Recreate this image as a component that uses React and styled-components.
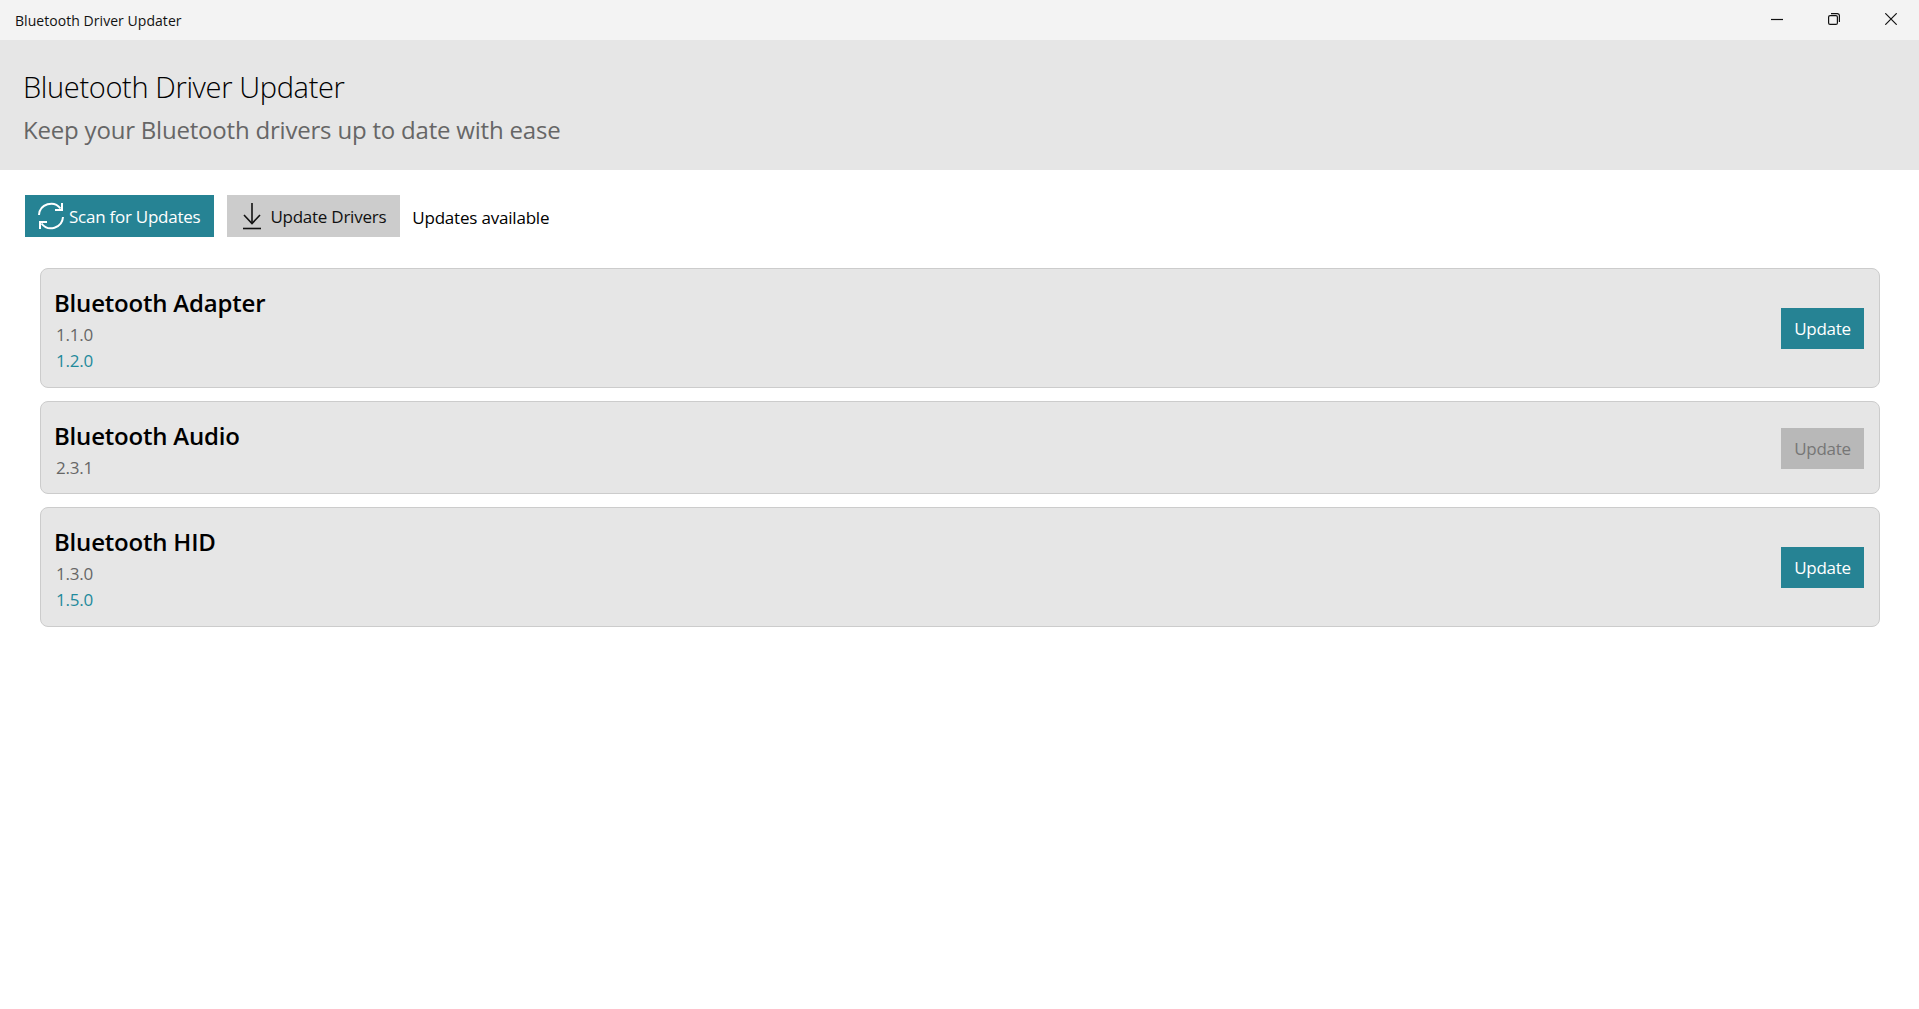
import React from "react";
import styled, { createGlobalStyle } from "styled-components";

const teal = "#268394";

const GlobalStyle = createGlobalStyle`
  html, body {
    margin: 0;
    height: 100%;
    background: #fff;
    font-family: "Open Sans", "Noto Sans", sans-serif;
    color: #000;
  }
  #root { height: 100%; }
`;

const Page = styled.div`
  display: flex;
  flex-direction: column;
  height: 100%;
`;

const TitleBar = styled.div`
  display: flex;
  align-items: center;
  justify-content: space-between;
  height: 40px;
  background: #f3f3f3;
  padding-left: 15px;
`;

const TitleBarText = styled.span`
  font-size: 14px;
  letter-spacing: 0.05px;
  color: #111;
`;

const WindowControls = styled.div`
  display: flex;
`;

const WindowButton = styled.div`
  display: flex;
  align-items: center;
  justify-content: center;
  width: 57px;
  height: 40px;
  margin-top: -2px;
`;

const Header = styled.header`
  display: flex;
  flex-direction: column;
  height: 130px;
  box-sizing: border-box;
  padding: 26px 0 0 23px;
  background: #e6e6e6;
`;

const Heading = styled.h1`
  margin: 0;
  font-size: 29px;
  line-height: 42px;
  font-weight: 300;
  letter-spacing: -0.35px;
`;

const SubHeading = styled.h2`
  margin: 0;
  font-size: 24px;
  line-height: 44px;
  font-weight: 400;
  letter-spacing: -0.2px;
  color: #666;
`;

const Toolbar = styled.div`
  display: flex;
  align-items: center;
  gap: 13px;
  padding: 25px 0 0 25px;
`;

const ToolButton = styled.button`
  display: flex;
  align-items: center;
  gap: 4px;
  height: 42px;
  padding: ${(p) => (p.$primary ? "0 14px 0 12px" : "0 14px 0 11px")};
  border: 0;
  font: inherit;
  font-size: 17px;
  letter-spacing: -0.25px;
  background: ${(p) => (p.$primary ? teal : "#cccccc")};
  color: ${(p) => (p.$primary ? "#fff" : "#111")};
`;

const Status = styled.span`
  margin: 2px 0 0 -1px;
  font-size: 17px;
  letter-spacing: -0.2px;
`;

const DriverList = styled.div`
  display: flex;
  flex-direction: column;
  gap: 13px;
  padding: 31px 39px 0 40px;
`;

const Card = styled.div`
  display: flex;
  align-items: center;
  justify-content: space-between;
  box-sizing: border-box;
  padding: 15px 15px 12px 13px;
  border: 1px solid #cccccc;
  border-radius: 8px;
  background: #e6e6e6;
`;

const CardText = styled.div`
  display: flex;
  flex-direction: column;
`;

const DriverName = styled.div`
  font-size: 24px;
  line-height: 37px;
  font-weight: 600;
  letter-spacing: -0.2px;
  color: #000;
`;

const Version = styled.div`
  margin: ${(p) => (p.$latest ? "-1px 0 1px 2px" : "0 0 0 2px")};
  font-size: 17px;
  line-height: 27px;
  letter-spacing: -0.2px;
  color: ${(p) => (p.$latest ? "#1f8a9c" : "#666")};
`;

const UpdateButton = styled.button`
  width: 83px;
  height: 41px;
  margin-bottom: 2px;
  padding: 0;
  border: 0;
  font: inherit;
  font-size: 17px;
  letter-spacing: -0.3px;
  background: ${(p) => (p.disabled ? "#b8b8b8" : teal)};
  color: ${(p) => (p.disabled ? "#767676" : "#fff")};
`;

const SyncIcon = () => (
  <svg width="28" height="28" viewBox="0 0 28 28" fill="none" stroke="#fff" strokeWidth="2">
    <path d="M2 13 A12 12 0 0 1 23.5 6.5" />
    <path d="M25 1 V8 H18" />
    <path d="M26 15 A12 12 0 0 1 4.5 21.5" />
    <path d="M3 27 V20 H10" />
  </svg>
);

const DownloadIcon = () => (
  <svg width="28" height="28" viewBox="0 0 28 28" fill="none" stroke="#111" strokeWidth="1.6">
    <path d="M14 1 V21" />
    <path d="M6 13 L14 21.5 L22 13" />
    <path d="M5 26.5 H23" />
  </svg>
);

const MinimizeIcon = () => (
  <svg width="12" height="12" viewBox="0 0 12 12" fill="none" stroke="#111" strokeWidth="1.2">
    <path d="M0 6.5 H12" />
  </svg>
);

const RestoreIcon = () => (
  <svg width="12" height="12" viewBox="0 0 12 12" fill="none" stroke="#111" strokeWidth="1.2">
    <rect x="0.6" y="2.6" width="8.8" height="8.8" rx="1.5" />
    <path d="M3 0.6 H9.5 A2 2 0 0 1 11.4 2.6 V9" />
  </svg>
);

const CloseIcon = () => (
  <svg width="12" height="12" viewBox="0 0 12 12" fill="none" stroke="#111" strokeWidth="1.2">
    <path d="M0.3 0.3 L11.7 11.7 M11.7 0.3 L0.3 11.7" />
  </svg>
);

const drivers = [
  { name: "Bluetooth Adapter", current: "1.1.0", latest: "1.2.0" },
  { name: "Bluetooth Audio", current: "2.3.1" },
  { name: "Bluetooth HID", current: "1.3.0", latest: "1.5.0" },
];

const App = () => (
  <Page>
    <GlobalStyle />
    <TitleBar>
      <TitleBarText>Bluetooth Driver Updater</TitleBarText>
      <WindowControls>
        <WindowButton><MinimizeIcon /></WindowButton>
        <WindowButton><RestoreIcon /></WindowButton>
        <WindowButton><CloseIcon /></WindowButton>
      </WindowControls>
    </TitleBar>
    <Header>
      <Heading>Bluetooth Driver Updater</Heading>
      <SubHeading>Keep your Bluetooth drivers up to date with ease</SubHeading>
    </Header>
    <Toolbar>
      <ToolButton $primary><SyncIcon />Scan for Updates</ToolButton>
      <ToolButton><DownloadIcon />Update Drivers</ToolButton>
      <Status>Updates available</Status>
    </Toolbar>
    <DriverList>
      {drivers.map((d) => (
        <Card key={d.name}>
          <CardText>
            <DriverName>{d.name}</DriverName>
            <Version>{d.current}</Version>
            {d.latest && <Version $latest>{d.latest}</Version>}
          </CardText>
          <UpdateButton disabled={!d.latest}>Update</UpdateButton>
        </Card>
      ))}
    </DriverList>
  </Page>
);

export default App;
